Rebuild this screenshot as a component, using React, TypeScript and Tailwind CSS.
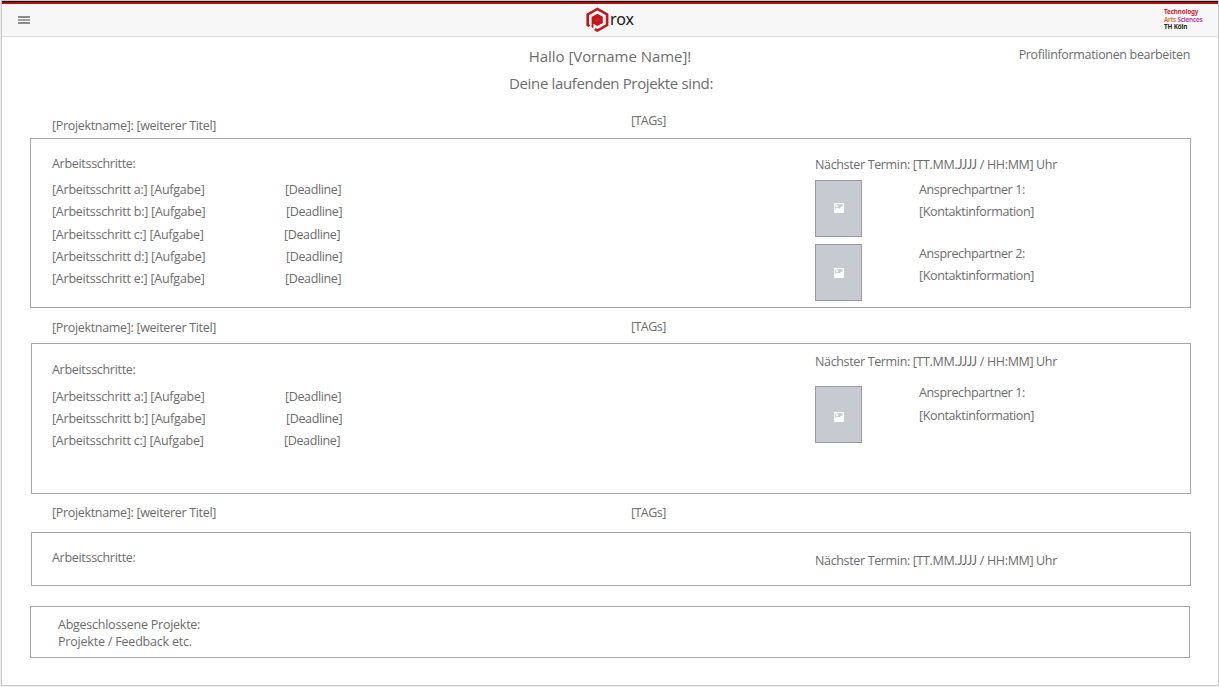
import type { ReactNode } from "react";

const line = "h-4 whitespace-nowrap text-[12.5px] leading-4";

function Line({ className = "tracking-[-0.25px]", children }: { className?: string; children: ReactNode }) {
  return <div className={`${line} ${className}`}>{children}</div>;
}

function Logo() {
  return (
    <svg width="24" height="26" viewBox="0 0 24 26" aria-hidden="true">
      <path
        d="M3.6 19.2 1.7 18.1V7.4L11.4 1.9 21.1 7.4V18.1L11.4 23.6 8.8 22.1"
        fill="none"
        stroke="#c4151b"
        strokeWidth="2.6"
      />
      <path d="M11.4 6.8 16.8 9.8V16L11.4 19 7.4 16.8V21.3L5.6 20.3V9.9Z" fill="#c4151b" />
      <path d="M11.4 10.4 13.6 11.7V14.1L11.4 15.4 9.2 14.1V11.7Z" fill="#cb2429" />
    </svg>
  );
}

function Portrait({ className }: { className: string }) {
  return (
    <div className={`flex h-[57px] w-[47px] shrink-0 justify-center border border-[#9b9b9f] bg-[#c8cad2] ${className}`}>
      <svg width="10" height="10" viewBox="0 0 10 10" aria-hidden="true">
        <rect width="10" height="10" rx="1.2" fill="#fff" />
        <path d="M1.3 1.3H8.7V4L7.8 3.3 5 5.7 3.6 4.6 1.3 6.2Z" fill="#c8cad2" />
        <circle cx="3" cy="3" r="1" fill="#fff" />
      </svg>
    </div>
  );
}

function Contact({ name, top, infoGap, iconTop }: { name: string; top: string; infoGap: string; iconTop: string }) {
  return (
    <div className="flex">
      <Portrait className={iconTop} />
      <div className={`ml-[57px] ${top}`}>
        <Line className="tracking-[-0.37px]">{name}</Line>
        <Line className={`tracking-[-0.37px] ${infoGap}`}>[Kontaktinformation]</Line>
      </div>
    </div>
  );
}

function Appointment({ className }: { className: string }) {
  return (
    <Line className={`tracking-[-0.35px] ${className}`}>
      Nächster Termin: [TT.MM.<span className="font-['Lato',sans-serif] tracking-[-0.2px]">JJJJ</span> / HH:MM] Uhr
    </Line>
  );
}

function Heading({ className, tagsClass }: { className: string; tagsClass: string }) {
  return (
    <div className={`flex pl-[50px] ${className}`}>
      <Line className="w-[579px] tracking-[-0.32px]">[Projektname]: [weiterer Titel]</Line>
      <Line className={`tracking-[-0.55px] ${tagsClass}`}>[TAGs]</Line>
    </div>
  );
}

const gaps: Record<string, string> = {
  a: "",
  b: "mt-1.5",
  c: "mt-[7px]",
  d: "mt-1.5",
  e: "mt-1.5",
};
const gapsShort: Record<string, string> = { a: "", b: "mt-1.5", c: "mt-1.5" };
const indents: Record<string, string> = {
  a: "pl-px",
  b: "pl-0.5",
  c: "pl-0",
  d: "pl-0.5",
  e: "pl-px",
};

function Steps({ steps, gap, className }: { steps: string[]; gap: Record<string, string>; className: string }) {
  return (
    <div className={className}>
      {steps.map((s) => (
        <div key={s} className={`flex ${gap[s]}`}>
          <Line className="w-[232px] tracking-[-0.23px]">[Arbeitsschritt {s}:] [Aufgabe]</Line>
          <Line className={`tracking-[-0.36px] ${indents[s]}`}>[Deadline]</Line>
        </div>
      ))}
    </div>
  );
}

export default function App() {
  return (
    <div className="h-[687px] w-[1219px] overflow-hidden bg-[#ececec] pl-px font-['Open_Sans','Noto_Sans',sans-serif] text-[#6c6c6c]">
      <div className="flex h-[686px] w-[1218px] flex-col border-x border-b border-[#c9c9c9] bg-white">
        <header className="flex h-[37px] shrink-0 flex-col border-b border-[#dedede] bg-[#f7f7f7]">
          <div className="h-px bg-[#c9c9c9]" />
          <div className="h-px bg-[#160606]" />
          <div className="h-0.5 bg-[#b20d13]" />
          <div className="grid h-8 grid-cols-3">
            <div className="flex flex-col gap-px pt-3 pl-4">
              <div className="h-0.5 w-3 bg-[#8d8d8d]" />
              <div className="h-0.5 w-3 bg-[#a0a0a0]" />
              <div className="h-0.5 w-3 bg-[#8d8d8d]" />
            </div>
            <div className="flex justify-center pt-[3px]">
              <Logo />
              <span className="font-['Noto_Sans','Open_Sans',sans-serif] text-[16px] leading-[25px] tracking-[-0.1px] text-[#161616]">
                rox
              </span>
            </div>
            <div className="ml-auto w-[54px] pt-1 font-['Noto_Sans',sans-serif] text-[6.3px] leading-[7.5px] font-bold tracking-[-0.15px] whitespace-nowrap">
              <div className="text-[#d31739]">Technology</div>
              <div className="font-semibold">
                <span className="text-[#ec6525]">Arts</span> <span className="text-[#b52a9a]">Sciences</span>
              </div>
              <div className="text-[#222]">TH Köln</div>
            </div>
          </div>
        </header>

        <main>
          <div className="grid grid-cols-3">
            <div className="col-start-2 pt-[7px] text-center text-[15px] leading-6 whitespace-nowrap">
              <h1 className="tracking-[-0.05px]">Hallo [Vorname Name]!</h1>
              <p className="mt-[3px] pl-0.5 tracking-[-0.35px]">Deine laufenden Projekte sind:</p>
            </div>
            <a className={`${line} mt-2.5 mr-7 justify-self-end tracking-[-0.33px]`}>Profilinformationen bearbeiten</a>
          </div>

          <Heading className="mt-[18px] h-[25px] items-start [&>*:first-child]:mt-[5px]" tagsClass="" />
          <section className="ml-7 flex h-[170px] w-[1161px] border border-[#a6a6a6]">
            <div className="w-[784px] pl-[21px]">
              <Line className="mt-[17px] tracking-[-0.3px]">Arbeitsschritte:</Line>
              <Steps steps={["a", "b", "c", "d", "e"]} gap={gaps} className="mt-2.5" />
            </div>
            <div>
              <Appointment className="mt-[18px]" />
              <div className="mt-[7px] flex flex-col gap-[7px]">
                <Contact name="Ansprechpartner 1:" top="pt-0.5" infoGap="mt-1.5" iconTop="pt-[22px]" />
                <Contact name="Ansprechpartner 2:" top="pt-0.5" infoGap="mt-1.5" iconTop="pt-[23px]" />
              </div>
            </div>
          </section>

          <Heading className="h-[35px] items-start pt-3" tagsClass="-mt-px" />
          <section className="ml-[29px] flex h-[151px] w-[1160px] border border-[#a6a6a6]">
            <div className="w-[783px] pl-5">
              <Line className="mt-[18px] tracking-[-0.3px]">Arbeitsschritte:</Line>
              <Steps steps={["a", "b", "c"]} gap={gapsShort} className="mt-[11px]" />
            </div>
            <div>
              <Appointment className="mt-2.5" />
              <div className="mt-4">
                <Contact name="Ansprechpartner 1:" top="-mt-px" infoGap="mt-[7px]" iconTop="pt-[25px]" />
              </div>
            </div>
          </section>

          <Heading className="h-[38px] items-start pt-[11px]" tagsClass="" />
          <section className="ml-[29px] flex h-[54px] w-[1160px] border border-[#a6a6a6]">
            <Line className="mt-[17px] w-[783px] pl-5 tracking-[-0.3px]">Arbeitsschritte:</Line>
            <Appointment className="mt-5" />
          </section>

          <section className="mt-5 ml-7 h-[52px] w-[1160px] border border-[#a6a6a6] pt-2.5 pl-[27px]">
            <Line>Abgeschlossene Projekte:</Line>
            <Line className="mt-px tracking-[-0.2px]">Projekte / Feedback etc.</Line>
          </section>
        </main>
      </div>
    </div>
  );
}
